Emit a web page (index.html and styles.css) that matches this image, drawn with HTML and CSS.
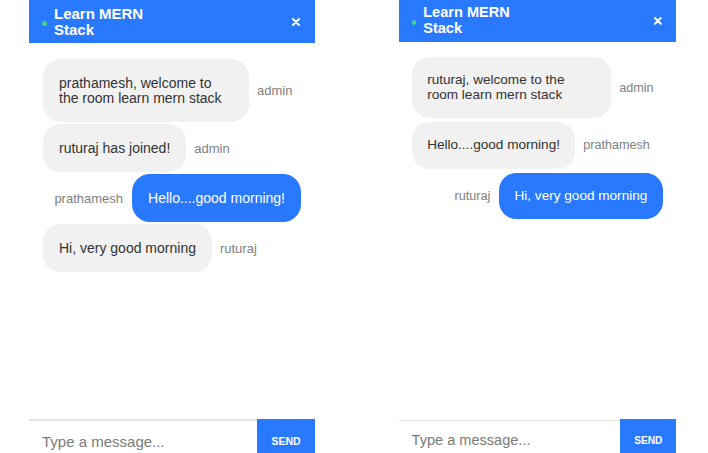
FILE: index.html
```html
<!DOCTYPE html>
<html lang="en">
<head>
<meta charset="utf-8">
<title>Chat</title>
<link rel="stylesheet" href="styles.css">
</head>
<body>
<div class="stage">
  <section class="chat">
    <header class="chat-head">
      <span class="dot"></span>
      <h1 class="title">Learn MERN<br>Stack</h1>
      <svg class="close" width="8" height="8" viewBox="0 0 8 8"><path d="M1 1L7 7M7 1L1 7" stroke="#fff" stroke-width="2" stroke-linecap="round"/></svg>
    </header>
    <div class="messages">
      <div class="row">
        <div class="bubble">prathamesh, welcome to the room learn mern stack</div>
        <span class="who">admin</span>
      </div>
      <div class="row">
        <div class="bubble">ruturaj has joined!</div>
        <span class="who">admin</span>
      </div>
      <div class="row mine">
        <span class="who">prathamesh</span>
        <div class="bubble">Hello....good morning!</div>
      </div>
      <div class="row">
        <div class="bubble">Hi, very good morning</div>
        <span class="who">ruturaj</span>
      </div>
    </div>
    <form class="composer">
      <input class="field" type="text" placeholder="Type a message...">
      <button class="send" type="button">SEND</button>
    </form>
  </section>

  <section class="chat chat-small">
    <header class="chat-head">
      <span class="dot"></span>
      <h1 class="title">Learn MERN<br>Stack</h1>
      <svg class="close" width="8" height="8" viewBox="0 0 8 8"><path d="M1 1L7 7M7 1L1 7" stroke="#fff" stroke-width="2" stroke-linecap="round"/></svg>
    </header>
    <div class="messages">
      <div class="row">
        <div class="bubble">ruturaj, welcome to the room learn mern stack</div>
        <span class="who">admin</span>
      </div>
      <div class="row">
        <div class="bubble">Hello....good morning!</div>
        <span class="who">prathamesh</span>
      </div>
      <div class="row mine">
        <span class="who">ruturaj</span>
        <div class="bubble">Hi, very good morning</div>
      </div>
    </div>
    <form class="composer">
      <input class="field" type="text" placeholder="Type a message...">
      <button class="send" type="button">SEND</button>
    </form>
  </section>
</div>
</body>
</html>
```

FILE: styles.css
```css
html, body {
  margin: 0;
  padding: 0;
  background: #fff;
  overflow: hidden;
  height: 453px;
}
body {
  font-family: "Liberation Sans", Arial, sans-serif;
  color: #333;
}
.stage {
  display: flex;
  align-items: flex-start;
  gap: 84px;
  padding-left: 29px;
}
.chat {
  width: 286px;
  height: 461px;
  display: flex;
  flex-direction: column;
  background: #fff;
}
.chat-small {
  zoom: 0.97;
  height: 474px;
}
.chat-small .messages {
  gap: 4px;
  padding-left: 13px;
}
.chat-head {
  height: 43px;
  flex: none;
  background: #2979ff;
  display: flex;
  align-items: center;
  padding: 0 15px 0 13px;
  box-sizing: border-box;
  color: #fff;
}
.dot {
  width: 5px;
  height: 5px;
  border-radius: 50%;
  background: #3fd39b;
  margin-top: 3px;
  margin-right: 7px;
  flex: none;
}
.title {
  margin: 0;
  font-size: 15px;
  line-height: 16px;
  font-weight: bold;
  flex: 1;
}
.close {
  display: block;
  flex: none;
  margin-top: 1px;
}
.messages {
  flex: 1;
  padding: 16px 14px 0;
  display: flex;
  flex-direction: column;
  gap: 2px;
}
.row {
  display: flex;
  align-items: center;
  gap: 8px;
}
.row.mine {
  justify-content: flex-end;
  gap: 9px;
}
.bubble {
  background: #f1f1f1;
  color: #333;
  font-size: 14px;
  padding: 16.5px 16px;
  border-radius: 18px;
  line-height: 15px;
  max-width: 206px;
  box-sizing: border-box;
}
.mine .bubble {
  background: #2979ff;
  color: #fff;
}
.who {
  font-size: 13px;
  color: #808080;
}
.composer {
  margin: 0;
  flex: none;
  height: 40px;
  display: flex;
  border-top: 2px solid #e6e6e6;
}
.field {
  flex: 1;
  min-width: 0;
  border: none;
  outline: none;
  padding: 0 0 0 13px;
  font-family: "Liberation Sans", Arial, sans-serif;
  font-size: 15px;
  color: #333;
  background: #fff;
}
.field::placeholder {
  color: #7a7a7a;
}
.send {
  width: 58px;
  flex: none;
  border: none;
  margin-top: -2px;
  background: #2979ff;
  color: #fff;
  font-family: "Liberation Sans", Arial, sans-serif;
  font-weight: bold;
  font-size: 10.5px;
  padding: 2px 0 0;
}
```
